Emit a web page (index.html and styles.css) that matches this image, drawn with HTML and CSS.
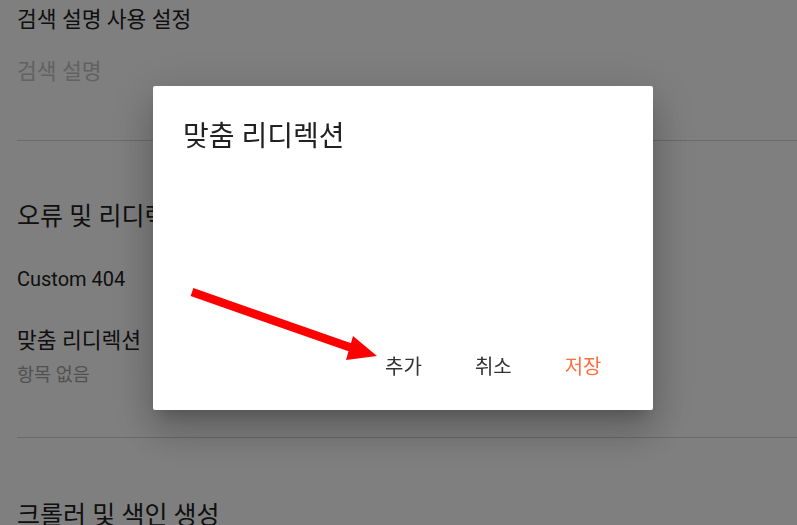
FILE: index.html
```html
<!DOCTYPE html>
<html>
  <head>
    <title>
      설정
    </title>

    <link rel="stylesheet" href="styles.css">
  </head>
  <body>
    <div id="settings">
      <div class="section first">
        <div class="label ko">검색 설명 사용 설정</div>
        <div class="hint">검색 설명</div>
      </div>

      <div class="section">
        <h2 class="heading">오류 및 리디렉션</h2>
        <div class="label custom">Custom 404</div>
        <div class="label ko redirect">맞춤 리디렉션</div>
        <div class="sub">항목 없음</div>
      </div>

      <div class="section last">
        <h2 class="heading">크롤러 및 색인 생성</h2>
      </div>
    </div>

    <div class="backdrop"></div>

    <div class="dialog">
      <div class="dialogtitle">맞춤 리디렉션</div>
      <div class="dialogactions">
        <button class="btn">추가</button>
        <button class="btn">취소</button>
        <button class="btn primary">저장</button>
      </div>
    </div>

    <!-- annotation arrow drawn over the screenshot -->
    <svg class="arrow" width="797" height="525" viewBox="0 0 797 525">
      <line x1="192" y1="292" x2="352" y2="348" stroke="#ff0000" stroke-width="8.5"/>
      <polygon points="377,356 353,336 346,360" fill="#ff0000"/>
    </svg>
  </body>
</html>
```

FILE: styles.css
```css
      html, body {
        margin: 0;
        height: 100%;
        overflow: hidden;
      }
      body {
        background: #fff;
        font-family: Roboto, "Noto Sans CJK KR", sans-serif;
        color: #212121;
      }
      #settings {
        padding-left: 17px;
      }
      .section {
        border-bottom: 1px solid #d6d6d6;
      }
      .section.first {
        padding-top: 6px;
        padding-bottom: 54px;
      }
      .section.last {
        border-bottom: none;
      }
      .label {
        font-size: 20px;
        line-height: 28px;
      }
      .label.ko {
        font-size: 21.5px;
      }
      .hint {
        margin-top: 24px;
        font-size: 21.5px;
        line-height: 28px;
        color: #c4c4c4;
      }
      .heading {
        margin: 60px 0 0;
        font-size: 25px;
        font-weight: normal;
        line-height: 32px;
      }
      .last .heading {
        margin-top: 62px;
      }
      .custom {
        margin-top: 32px;
      }
      .redirect {
        margin-top: 34px;
      }
      .sub {
        margin-top: 8px;
        padding-bottom: 50px;
        font-size: 18.5px;
        line-height: 24px;
        color: #a3a3a3;
      }
      .backdrop {
        position: fixed;
        left: 0;
        top: 0;
        right: 0;
        bottom: 0;
        background: rgba(0, 0, 0, 0.5);
      }
      .dialog {
        position: fixed;
        left: 153px;
        top: 86px;
        width: 500px;
        height: 324px;
        box-sizing: border-box;
        display: flex;
        flex-direction: column;
        background: #fff;
        border-radius: 2px;
        box-shadow: 0 11px 15px -7px rgba(0, 0, 0, 0.2),
                    0 24px 38px 3px rgba(0, 0, 0, 0.14),
                    0 9px 46px 8px rgba(0, 0, 0, 0.12);
      }
      .dialogtitle {
        padding: 34px 30px 0;
        font-size: 28px;
        line-height: 34px;
        color: #212121;
      }
      .dialogactions {
        margin-top: auto;
        display: flex;
        justify-content: flex-end;
        padding: 0 25px 28px 0;
      }
      .btn {
        padding: 0 26.5px;
        border: none;
        background: none;
        font-family: Roboto, "Noto Sans CJK KR", sans-serif;
        font-size: 20px;
        line-height: 30px;
        color: #333;
        cursor: pointer;
      }
      .btn.primary {
        color: #ff6e40;
      }
      .btn:focus {
        outline: none;
      }
      .arrow {
        position: fixed;
        left: 0;
        top: 0;
      }
```
